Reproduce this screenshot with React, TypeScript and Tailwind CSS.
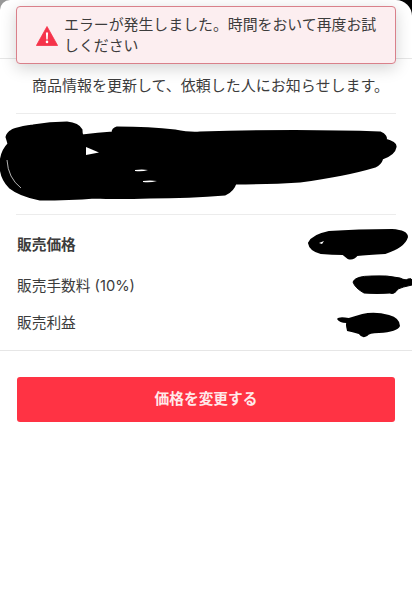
export default function App() {
  return (
    <div className="relative h-[600px] w-[412px] overflow-hidden bg-[linear-gradient(to_right,#999,#000_100%)] font-['Inter','Noto_Sans_CJK_JP',sans-serif] text-[14.7px] text-[#3c3c3c]">
      <div className="h-[600px] rounded-tl-[10px] rounded-tr-[16px] bg-white">
        <div className="h-[59px] border-b border-[#e6e6e6]" />
        <p className="flex h-[54px] items-center justify-center pl-[9px] pt-[1px] text-center text-[15px]">商品情報を更新して、依頼した人にお知らせします。</p>
        <div className="mx-4 h-[102px] border-y border-[#ececec]">
          <svg viewBox="0 114 412 100" className="-ml-4 h-[100px] w-[412px]">
            <path fill="#000" stroke="#000" strokeWidth="3" strokeLinejoin="round" d="M12 131Q12 129 33 126Q50 123 67 123Q78 124 81 130Q81 134 82 136Q98 134 113 133Q113 129 117 128Q150 128 175 131Q190 134 200 133Q300 130 380 133Q387 136 385 140Q396 143 395 147Q394 154 382 158Q380 164 375 166Q345 175 300 181Q270 183 235 183Q233 190 225 194Q190 197 150 197Q115 198 95 197Q70 199 40 199Q20 195 10 187Q1 178 1 165Q1 152 9 144Q8 140 7 137Q8 133 12 131Z" />
            <path fill="#fff" d="M86 147L99 152.5L86 155Z" />
            <path fill="#fff" d="M135 170Q142 169 148 170Q142 172 135 171ZM143 181Q150 180 157 181Q150 183 143 182Z" />
            <path fill="none" stroke="#fff" strokeWidth="0.7" d="M7 160Q8 178 21 188" />
          </svg>
        </div>
        <div className="border-b border-[#e6e6e6] pb-[10px] pl-[17px] pt-[12px]">
          <div className="flex h-[36px] items-center justify-between font-bold">
            <span>販売価格</span>
            <svg viewBox="0 0 104 32" className="mr-[1px] h-[32px] w-[104px]">
              <path fill="#000" stroke="#000" strokeWidth="2" strokeLinejoin="round" d="M2 14Q6 6 22 3Q50 1 85 1Q100 2 100 8Q97 18 78 24Q60 25 50 26Q46 31 41 29L36 25Q25 25 14 24Q3 21 2 14Z" />
              <path fill="#fff" d="M12 14L17 12L15 15Z" />
            </svg>
          </div>
          <div className="mt-[3px] flex h-[40px] items-center justify-between">
            <span>販売手数料 (10%)</span>
            <svg viewBox="0 0 60 20" className="mb-[2px] h-[20px] w-[60px]">
              <path fill="#000" stroke="#000" strokeWidth="1" strokeLinejoin="round" d="M1 7Q3 1 20 1Q35 0 48 3Q54 6 56 4Q60 3 60 5V10Q50 12 46 14Q42 20 38 18Q25 19 12 18Q3 13 1 7Z" />
            </svg>
          </div>
          <div className="flex h-[34px] items-center justify-between">
            <span>販売利益</span>
            <svg viewBox="0 0 75 26" preserveAspectRatio="none" className="mr-[12px] mt-[3px] h-[26px] w-[63px]">
              <path fill="#000" d="M0 7Q2 4 14 6Q22 4 30 2Q45 -1 62 3Q75 6 75 14Q72 20 50 21Q38 21 36 24Q30 27 26 22Q18 20 12 19Q10 13 11 11Q3 11 0 7Z" />
            </svg>
          </div>
        </div>
        <div className="px-[17px] pt-[26px]">
          <button className="block h-[45px] w-[378px] rounded-[3px] bg-[#ff3344] text-[14.7px] font-bold text-[#ffe9ea]">価格を変更する</button>
        </div>
      </div>
      <div className="absolute left-[16px] top-[6px] flex h-[58px] w-[380px] items-center gap-[6px] rounded-[4px] border border-[#d9808a] bg-[#fceef0] pl-[19px] pr-[14px] pt-[2px] shadow-[0_4px_16px_rgba(0,0,0,0.18)]">
        <svg viewBox="0 0 22 20" className="h-[20px] w-[22px] shrink-0">
          <path fill="#f5334a" d="M11 0.5 L21.6 19.5 H0.4 Z" stroke="#f5334a" strokeWidth="0.8" strokeLinejoin="round" />
          <path fill="#fff" d="M9.9 6.5h2.2l-.4 7h-1.4zM11 14.6a1.3 1.3 0 1 1 0 2.6a1.3 1.3 0 0 1 0-2.6z" />
        </svg>
        <p className="text-[14.9px] leading-[21px]">エラーが発生しました。時間をおいて再度お試しください</p>
      </div>
    </div>
  );
}
